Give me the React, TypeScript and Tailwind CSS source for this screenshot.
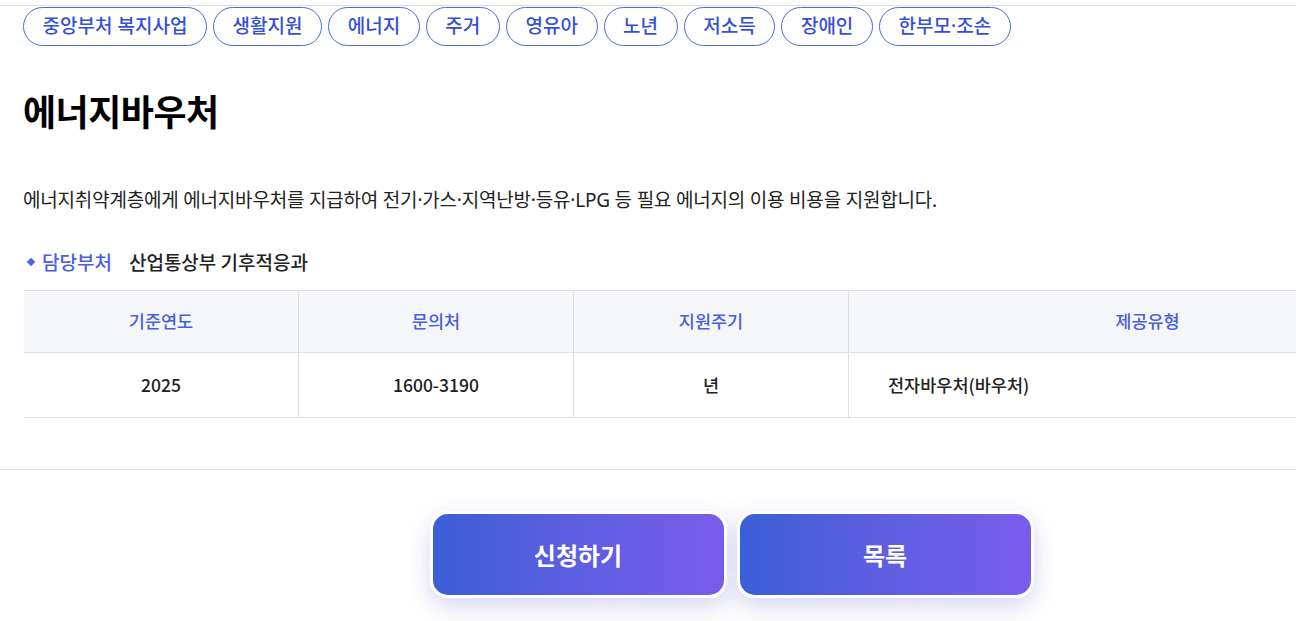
const CATEGORIES = ['중앙부처 복지사업', '생활지원', '에너지', '주거', '영유아', '노년', '저소득', '장애인', '한부모·조손'];

const COLUMNS = [
  { label: '기준연도', value: '2025', width: 'w-[274px]', align: 'text-center' },
  { label: '문의처', value: '1600-3190', width: 'w-[275px]', align: 'text-center' },
  { label: '지원주기', value: '년', width: 'w-[275px]', align: 'text-center' },
  { label: '제공유형', value: '전자바우처(바우처)', width: 'w-[598px]', align: 'text-left pl-[39px]' },
];

export default function App() {
  return (
    <div className="w-full overflow-hidden bg-white font-['Noto_Sans_CJK_KR',sans-serif] text-[#222]">
      <div className="w-[1463px]">
        <div className="mt-[5px] h-px w-full bg-[#dedede]" />

        <div className="flex gap-[6px] pl-[23px] pt-[1px]">
          {CATEGORIES.map((item) => (
            <button
              key={item}
              type="button"
              className="h-[39px] rounded-full border border-[#4a6ae0] px-[18.6px] font-['Noto_Sans','Noto_Sans_CJK_KR',sans-serif] text-[19px] font-medium text-[#3550d4]"
            >
              {item}
            </button>
          ))}
        </div>

        <div className="px-[23px]">
          <h1 className="mt-[39px] text-[36px] leading-[50px] font-bold tracking-[-0.5px] text-black">에너지바우처</h1>

          <p className="mt-[52px] font-['Noto_Sans','Noto_Sans_CJK_KR',sans-serif] text-[19px] leading-[26px] tracking-[-0.2px] text-[#222]">
            에너지취약계층에게 에너지바우처를 지급하여 전기·가스·지역난방·등유·LPG 등 필요 에너지의 이용 비용을 지원합니다.
          </p>

          <div className="mt-[36px] flex items-center text-[19px] leading-[26px] font-medium">
            <span className="ml-[5px] mr-[8px] h-[6px] w-[6px] rotate-45 bg-[#4a63e0]" />
            <span className="text-[#4a5fe0]">담당부처</span>
            <span className="ml-[17px] text-[#222]">산업통상부 기후적응과</span>
          </div>

          <div className="mt-[15px] ml-px flex border-y border-[#dedede]">
            {COLUMNS.map((col, i) => (
              <div key={col.label} className={`${col.width} flex shrink-0 flex-col ${i > 0 ? 'border-l border-[#dedede]' : ''}`}>
                <div className="flex h-[62px] items-center justify-center border-b border-[#dedede] bg-[#f5f6fa] text-[17.5px] font-medium text-[#4a5fdd]">
                  {col.label}
                </div>
                <div className={`h-[64px] text-[17.5px] leading-[64px] font-medium text-[#222] ${col.align}`}>{col.value}</div>
              </div>
            ))}
          </div>
        </div>

        <div className="mt-[51px] h-px w-full bg-[#e3e3e3]" />

        <div className="mt-[41px] flex justify-center gap-[10px] pb-[30px]">
          {['신청하기', '목록'].map((label) => (
            <button
              key={label}
              type="button"
              className="h-[87px] w-[297px] rounded-[18px] border-[3px] border-white bg-gradient-to-r from-[#3a5fd6] to-[#7a5cec] text-[24px] font-bold text-white shadow-[0_8px_24px_rgba(90,90,200,0.25)]"
            >
              {label}
            </button>
          ))}
        </div>
      </div>
    </div>
  );
}
